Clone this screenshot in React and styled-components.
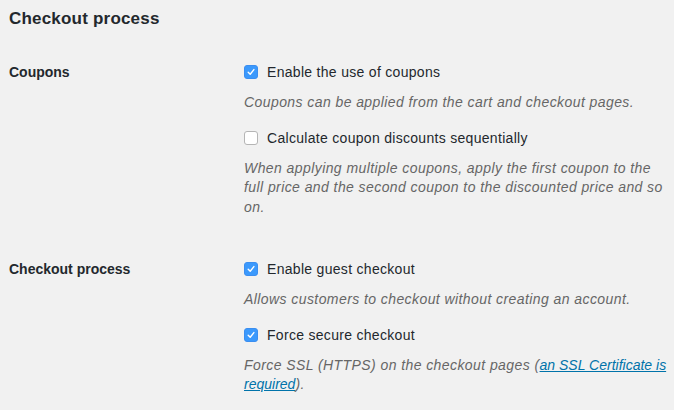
import React from "react";
import styled, { createGlobalStyle } from "styled-components";

const GlobalStyle = createGlobalStyle`
  body {
    margin: 0;
    background: #f1f1f1;
    color: #23282d;
    font-family: "Liberation Sans", Arial, sans-serif;
    font-size: 14px;
  }
`;

const Page = styled.div`
  padding: 0 0 0 9px;
  width: 674px;
  box-sizing: border-box;
`;

const Title = styled.h2`
  margin: 0;
  padding-top: 8px;
  font-size: 17px;
  line-height: 22px;
  font-weight: 700;
  letter-spacing: 0.2px;
  color: #23282d;
`;

const Table = styled.div`
  display: flex;
  flex-direction: column;
  gap: 42px;
  padding-top: 32px;
`;

const Row = styled.div`
  display: flex;
`;

const RowLabel = styled.div`
  width: 235px;
  flex-shrink: 0;
  font-weight: 700;
  line-height: 20px;
  color: #23282d;
`;

const Field = styled.div`
  width: 428px;
  flex-shrink: 0;
`;

const Option = styled.div`
  margin-top: ${(p) => (p.$first ? "0" : "15px")};
`;

const CheckLine = styled.label`
  display: flex;
  align-items: center;
  gap: 9px;
  line-height: 20px;
  letter-spacing: 0.3px;
  color: #23282d;
`;

const Box = styled.span`
  width: 14px;
  height: 14px;
  box-sizing: border-box;
  border-radius: 3px;
  display: flex;
  align-items: center;
  justify-content: center;
  background: ${(p) => (p.$checked ? "#3b99fc" : "#fff")};
  border: 1px solid ${(p) => (p.$checked ? "#3b8ef0" : "#b5b5b5")};
`;

const Help = styled.p`
  margin: 11px 0 0;
  font-style: italic;
  color: #666;
  line-height: 19.5px;
  letter-spacing: 0.42px;
`;

const HelpLink = styled.a`
  color: #0073aa;
  text-decoration: underline;
  letter-spacing: 0;
`;

const sections = [
  {
    label: "Coupons",
    options: [
      {
        text: "Enable the use of coupons",
        checked: true,
        help: "Coupons can be applied from the cart and checkout pages.",
      },
      {
        text: "Calculate coupon discounts sequentially",
        checked: false,
        help: "When applying multiple coupons, apply the first coupon to the full price and the second coupon to the discounted price and so on.",
      },
    ],
  },
  {
    label: "Checkout process",
    options: [
      {
        text: "Enable guest checkout",
        checked: true,
        help: "Allows customers to checkout without creating an account.",
      },
      {
        text: "Force secure checkout",
        checked: true,
        help: (
          <>
            Force SSL (HTTPS) on the checkout pages (
            <HelpLink href="#">an SSL Certificate is required</HelpLink>).
          </>
        ),
      },
    ],
  },
];

const Check = ({ checked }) => (
  <Box $checked={checked}>
    {checked && (
      <svg width="10" height="10" viewBox="0 0 10 10">
        <path
          d="M2.2 5.3 L4.2 7.3 L7.9 2.6"
          fill="none"
          stroke="#fff"
          strokeWidth="1.4"
          strokeLinecap="round"
          strokeLinejoin="round"
        />
      </svg>
    )}
  </Box>
);

const App = () => {
  return (
    <Page>
      <GlobalStyle />
      <Title>Checkout process</Title>
      <Table>
        {sections.map((s) => (
          <Row key={s.label}>
            <RowLabel>{s.label}</RowLabel>
            <Field>
              {s.options.map((o, i) => (
                <Option key={i} $first={i === 0}>
                  <CheckLine>
                    <Check checked={o.checked} />
                    {o.text}
                  </CheckLine>
                  <Help>{o.help}</Help>
                </Option>
              ))}
            </Field>
          </Row>
        ))}
      </Table>
    </Page>
  );
};

export default App;
